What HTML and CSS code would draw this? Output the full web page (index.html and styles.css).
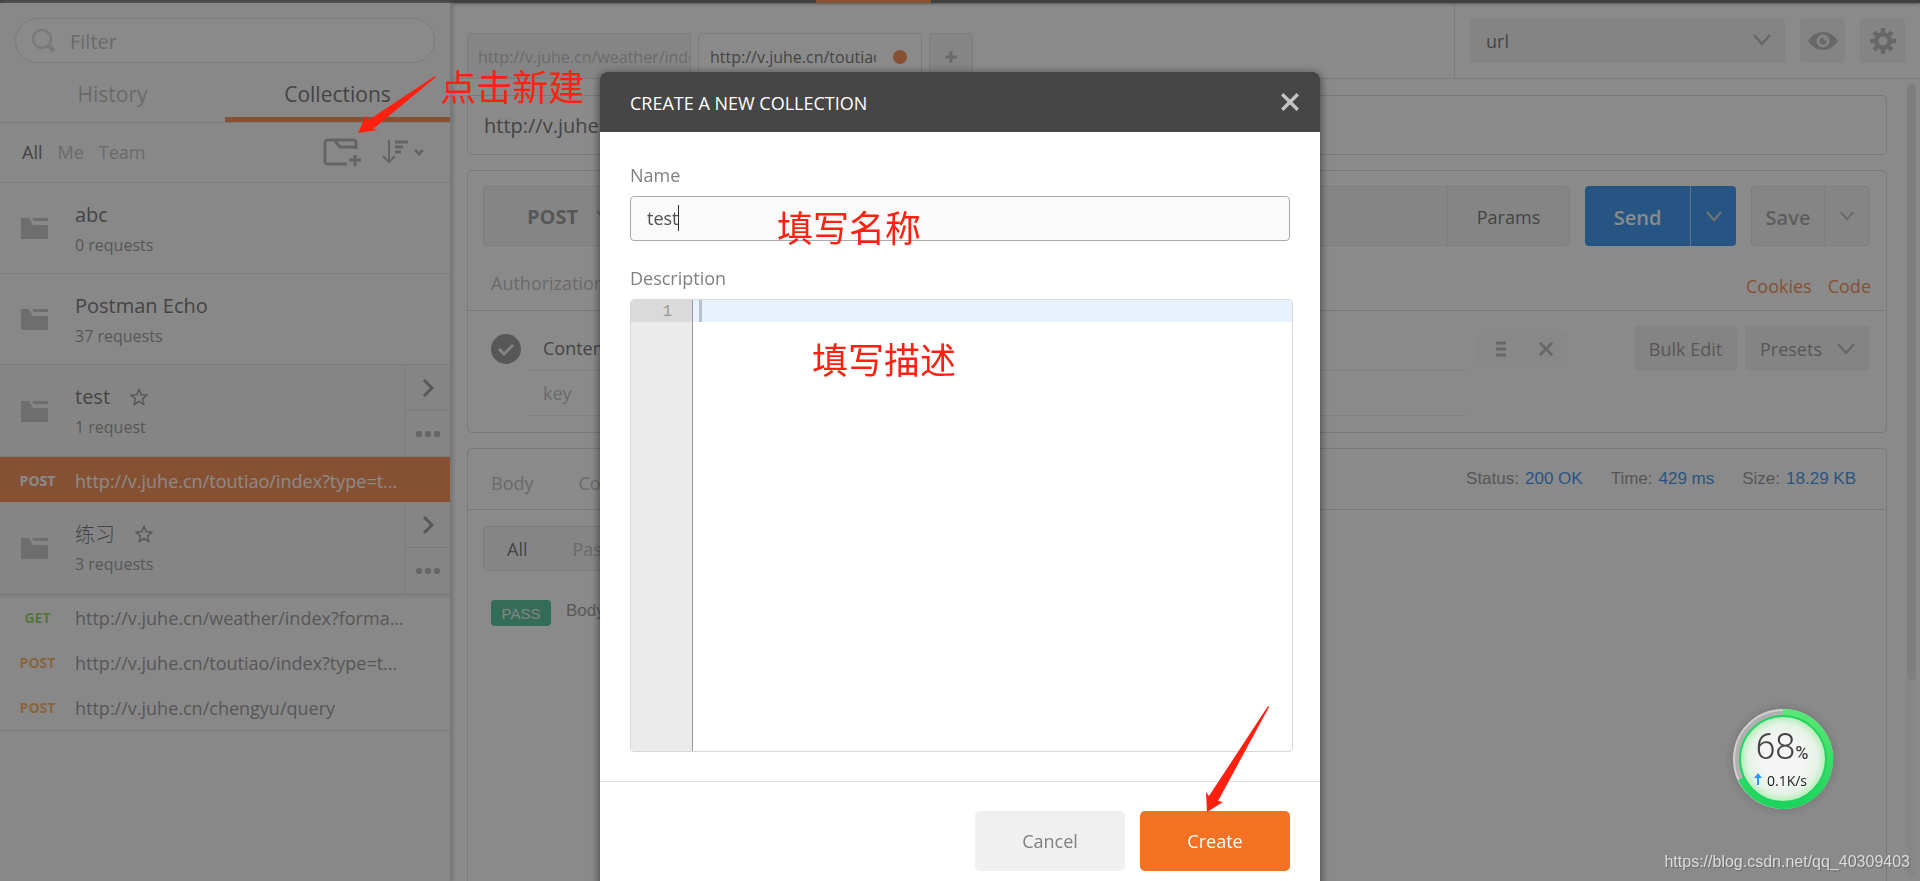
FILE: index.html
```html
<!DOCTYPE html>
<html lang="en">
<head>
<meta charset="utf-8">
<title>Create a new collection</title>
<link rel="stylesheet" href="styles.css">
</head>
<body>
<svg class="sprite" aria-hidden="true">
  <symbol id="folder" viewBox="0 0 27 22"><path d="M0 1h8l4 7h15v13a1 1 0 0 1-1 1H1a1 1 0 0 1-1-1z"/><path d="M11 1h15a1 1 0 0 1 1 1v2H13z"/></symbol>
  <symbol id="chev" viewBox="0 0 18 12"><path d="M1 1l8 9 8-9" fill="none" stroke="currentColor" stroke-width="2.4"/></symbol>
  <symbol id="right" viewBox="0 0 12 20"><path d="M2 2l8 8-8 8" fill="none" stroke="currentColor" stroke-width="3"/></symbol>
  <symbol id="dots" viewBox="0 0 24 6"><rect width="6" height="6" rx="2"/><rect x="9" width="6" height="6" rx="2"/><rect x="18" width="6" height="6" rx="2"/></symbol>
  <symbol id="star" viewBox="0 0 18 18"><path d="M9 1.3l2.2 5.4 5.8.4-4.5 3.700 1.500 5.800L9 13.500l-5 3.100 1.500-5.800L1 7.100l5.800-.4z" fill="none" stroke="currentColor" stroke-width="1.500" stroke-linejoin="round"/></symbol>
  <symbol id="cross" viewBox="0 0 18 18"><path d="M2 2l14 14M16 2L2 16" fill="none" stroke="currentColor" stroke-width="3"/></symbol>
</svg>

<div class="app">
  <header class="topbar"><span class="topbar-active"></span></header>
  <div class="workspace">
    <aside class="sidebar">
      <label class="filter">
        <svg width="25" height="24" viewBox="0 0 25 24"><circle cx="11" cy="10" r="9" fill="none" stroke="currentColor" stroke-width="2.500"/><path d="M17 16l6 6" stroke="currentColor" stroke-width="4"/></svg>
        <input type="text" placeholder="Filter" aria-label="Filter">
      </label>
      <nav class="side-tabs">
        <button>History</button>
        <button class="on">Collections</button>
      </nav>
      <div class="side-tools">
        <button class="on">All</button><button>Me</button><button>Team</button>
        <button class="new-folder" aria-label="New collection"><svg class="line" width="38" height="28" viewBox="0 0 38 28" stroke-width="3"><path d="M24 26H5q-3 0-3-3V5q0-3 3-3h25q3 0 3 3v6M11 2l6 7h16M32 17v11M26 22h12"/></svg></button>
        <button class="sort" aria-label="Sort"><svg class="line" width="42" height="24" viewBox="0 0 42 24" stroke-width="2"><path d="M7 0v22M1 16l6 6 6-6"/><path d="M13 2h13M13 7h8M13 12h6" stroke-width="3"/><path d="M33 10l4 4 4-4" stroke-width="3"/></svg></button>
      </div>
      <ul class="collections">
        <li class="row"><svg class="folder"><use href="#folder"/></svg><div class="info"><b>abc</b><small>0 requests</small></div></li>
        <li class="row"><svg class="folder"><use href="#folder"/></svg><div class="info"><b>Postman Echo</b><small>37 requests</small></div></li>
        <li class="row open"><svg class="folder"><use href="#folder"/></svg><div class="info"><b>test <svg class="star"><use href="#star"/></svg></b><small>1 request</small></div>
          <div class="row-actions"><button aria-label="Open"><svg width="12" height="20"><use href="#right"/></svg></button><button class="more" aria-label="More"><svg width="24" height="6"><use href="#dots"/></svg></button></div></li>
        <li class="request active"><span class="verb">POST</span><span class="link">http://v.juhe.cn/toutiao/index?type=t...</span></li>
        <li class="row open"><svg class="folder"><use href="#folder"/></svg><div class="info"><b><span class="cjk">练习</span> <svg class="star"><use href="#star"/></svg></b><small>3 requests</small></div>
          <div class="row-actions"><button aria-label="Open"><svg width="12" height="20"><use href="#right"/></svg></button><button class="more" aria-label="More"><svg width="24" height="6"><use href="#dots"/></svg></button></div></li>
        <li class="request first"><span class="verb get">GET</span><span class="link">http://v.juhe.cn/weather/index?forma...</span></li>
        <li class="request"><span class="verb">POST</span><span class="link">http://v.juhe.cn/toutiao/index?type=t...</span></li>
        <li class="request last"><span class="verb">POST</span><span class="link">http://v.juhe.cn/chengyu/query</span></li>
      </ul>
    </aside>

    <main class="main">
      <div class="head">
        <div class="tabs">
          <button class="tab"><span>http://v.juhe.cn/weather/index</span></button>
          <button class="tab on"><span>http://v.juhe.cn/toutiao</span><i class="dot"></i></button>
          <button class="tab add" aria-label="New tab"><svg width="12" height="12" viewBox="0 0 12 12"><path d="M6 0v12M0 6h12" stroke="currentColor" stroke-width="3"/></svg></button>
        </div>
        <div class="env">
          <div class="select"><select aria-label="Environment"><option>url</option></select><svg class="chev"><use href="#chev"/></svg></div>
          <button class="square" aria-label="Preview"><svg width="30" height="18" viewBox="0 0 30 18"><path d="M0 9Q6 0 15 0t15 9q-6 9-15 9T0 9z"/><circle cx="15" cy="9" r="6.500" fill="#f0f0f0"/><circle cx="15" cy="9" r="3.500"/><circle cx="17" cy="7" r="1.500" fill="#f0f0f0"/></svg></button>
          <button class="square" aria-label="Settings"><svg width="26" height="26" viewBox="-13 -13 26 26"><g stroke="currentColor" stroke-width="4.500"><path d="M0-13V13M-13 0H13M-9-9L9 9M9-9L-9 9"/></g><circle r="9"/><circle r="4.500" fill="#f0f0f0"/></svg></button>
        </div>
      </div>

      <div class="scroll">
        <div class="panels">
          <section class="panel title">http://v.juhe.cn/toutiao/index</section>

          <section class="panel">
            <div class="url-row">
              <div class="url-group">
                <div class="select method"><select aria-label="Method"><option>POST</option></select><svg class="chev"><use href="#chev"/></svg></div>
                <input type="text" aria-label="Request URL">
                <button class="params">Params</button>
              </div>
              <div class="split send"><button>Send</button><button aria-label="Send options"><svg class="chev medium"><use href="#chev"/></svg></button></div>
              <div class="split save"><button>Save</button><button aria-label="Save options"><svg class="chev small"><use href="#chev"/></svg></button></div>
            </div>
            <div class="subtabs"><button>Authorization</button><a href="#">Cookies</a><a href="#">Code</a></div>
            <div class="headers">
              <div class="keys">
                <div class="key-row"><svg class="check" width="30" height="30" viewBox="0 0 30 30"><circle cx="15" cy="15" r="15" fill="#808080"/><path d="M8 15l5 5 9-9" fill="none" stroke="#f0f0f0" stroke-width="3"/></svg><input type="text" value="Content-Type" aria-label="Header key"></div>
                <div class="key-row"><input type="text" placeholder="key" aria-label="New header key"></div>
              </div>
              <div class="row-tools">
                <button aria-label="Reorder"><svg width="10" height="16" viewBox="0 0 10 16"><path d="M0 2h10M0 8h10M0 14h10" stroke="currentColor" stroke-width="3"/></svg></button>
                <button aria-label="Remove"><svg width="16" height="16"><use href="#cross"/></svg></button>
              </div>
              <button class="soft">Bulk Edit</button>
              <button class="soft presets">Presets <svg class="chev"><use href="#chev"/></svg></button>
            </div>
          </section>

          <section class="panel response">
            <div class="res-head">
              <button>Body</button><button>Cookies</button>
              <dl><dt>Status:</dt><dd>200 OK</dd><dt>Time:</dt><dd>429 ms</dd><dt>Size:</dt><dd>18.29 KB</dd></dl>
            </div>
            <div class="res-filter"><button class="on">All</button><button>Passed</button></div>
            <p class="result"><span class="pass">PASS</span><span>Body</span></p>
          </section>
        </div>
        <div class="track"><div class="thumb"></div></div>
      </div>
    </main>
  </div>
</div>

<div class="backdrop">
  <form class="modal" role="dialog" aria-labelledby="dlg">
    <header class="modal-head"><h2 id="dlg">CREATE A NEW COLLECTION</h2><button type="button" aria-label="Close"><svg width="20" height="20"><use href="#cross"/></svg></button></header>
    <div class="modal-body">
      <label for="name">Name</label>
      <div class="field"><input id="name" type="text" value="test"><i class="caret"></i><span class="note note-name">填写名称</span></div>
      <label for="desc">Description</label>
      <div class="editor">
        <div class="gutter"><span>1</span></div>
        <textarea id="desc"></textarea>
        <i class="line-caret"></i>
        <span class="note note-desc">填写描述</span>
      </div>
    </div>
    <footer class="modal-foot"><button type="button">Cancel</button><button type="submit" class="primary">Create</button>
      <svg class="arrow arrow-create" width="66" height="108" viewBox="0 0 66 108"><path d="M64 1L65 2L14 96L19 97L3 107L2 87L5 91z"/></svg>
    </footer>
  </form>
</div>

<span class="note note-new">点击新建</span>
<svg class="arrow arrow-new" width="80" height="60" viewBox="0 0 80 60"><path d="M78 1L79 2L16 54L21 55L1 58L9 40L10 46z"/></svg>

<div class="meter">
  <svg width="116" height="116" viewBox="-58 -58 116 116">
    <defs>
      <radialGradient id="face"><stop offset=".5" stop-color="#f4f5f4"/><stop offset=".8" stop-color="#e6f3e6"/><stop offset="1" stop-color="#b4ecb8"/></radialGradient>
      <linearGradient id="ring" x1="0" y1="0" x2="0" y2="1"><stop offset="0" stop-color="#5be873"/><stop offset="1" stop-color="#19d45c"/></linearGradient>
      <radialGradient id="halo"><stop offset=".85" stop-color="#000" stop-opacity=".08"/><stop offset="1" stop-color="#000" stop-opacity="0"/></radialGradient>
    </defs>
    <circle r="58" fill="url(#halo)"/>
    <circle r="49" fill="#b0b0b0" stroke="#d0d0d0" stroke-width="2"/>
    <path d="M0-50A50 50 0 1 1-45 21L0 0z" fill="url(#ring)"/>
    <circle r="43" fill="url(#face)" stroke="#1fd35f" stroke-width="2"/>
    <path d="M-25 14l4 5h-3v7h-2v-7h-3z" fill="#2f96ff"/>
  </svg>
  <div class="meter-text"><p>68<small>%</small></p><span>0.1K/s</span></div>
</div>
<div class="watermark">https://blog.csdn.net/qq_40309403</div>
</body>
</html>
```
FILE: styles.css
```css
* { box-sizing: border-box; margin: 0; padding: 0; }
html, body { height: 100%; overflow: hidden; }
body { font: 18px/24px "Open Sans", "Noto Sans CJK SC", sans-serif; color: #505050; background: #fff; }
button, input, select, textarea { font: inherit; color: inherit; background: none; border: 0; outline: 0; min-width: 0; }
button { display: flex; align-items: center; justify-content: center; }
select { appearance: none; width: 100%; height: 100%; }
svg { display: block; flex: none; fill: currentColor; }
svg.line { fill: none; stroke: currentColor; }
ul { list-style: none; }
.sprite { position: absolute; width: 0; height: 0; }

.app { height: 100%; display: flex; flex-direction: column; }
.topbar { height: 3px; background: #464646; display: flex; justify-content: center; box-shadow: 0 1px 3px #808080; position: relative; }
.topbar-active { width: 115px; margin-right: 173px; background: #f47023; }
.workspace { flex: 1; min-height: 0; display: flex; }

.sidebar { width: 451px; flex: none; background: #fafafa; border-right: 1px solid #d4d4d4; box-shadow: 1px 0 5px #b0b0b0; z-index: 1; }
.filter { margin: 15px 15px 0; height: 45px; border: 1px solid #dbdbdb; border-radius: 23px; display: flex; align-items: center; gap: 14px; padding: 0 15px; color: #d4d4d4; background: #fff; }
.filter input { flex: 1; font-size: 20px; color: #808080; padding-top: 2px; }
::placeholder { color: #b0b0b0; opacity: 1; }
.side-tabs { display: flex; height: 60px; border-bottom: 1px solid #dbdbdb; }
.side-tabs button { flex: 1; font-size: 21px; color: #b0b0b0; padding-top: 8px; border-bottom: 5px solid transparent; }
.side-tabs .on { color: #505050; border-color: #f47023; }
.side-tools { display: flex; align-items: center; height: 60px; gap: 15px; padding: 0 26px 2px 22px; border-bottom: 1px solid #dbdbdb; color: #b0b0b0; }
.side-tools .on { color: #505050; }
.new-folder { margin-left: auto; color: #a0a0a0; }
.sort { margin-left: 6px; color: #a0a0a0; }
.row { height: 91px; display: flex; align-items: center; padding-left: 21px; border-bottom: 1px solid #dbdbdb; }
.row.open { height: 92px; background: #f3f3f3; }
.folder { width: 27px; height: 22px; color: #b8b8b8; }
.info { margin-left: 27px; flex: 1; padding-top: 3px; }
.info b { display: flex; align-items: center; font-size: 20px; line-height: 30px; font-weight: 400; gap: 20px; }
.info .cjk { font-weight: 300; font-family: "Noto Sans CJK SC", sans-serif; }
.info small { display: block; font-size: 16px; line-height: 30px; color: #808080; }
.star { width: 18px; height: 18px; color: #808080; }
.row-actions { width: 46px; align-self: stretch; border-left: 1px solid #dbdbdb; display: flex; flex-direction: column; color: #808080; }
.row-actions button { flex: 1; }
.row-actions .more { border-top: 1px solid #dbdbdb; color: #a8a8a8; }
.request { height: 45px; display: flex; align-items: center; color: #808080; padding-top: 2px; }
.verb { width: 75px; text-align: center; font-size: 14px; font-weight: 700; color: #f9a33c; }
.verb.get { color: #7dc93c; }
.request.active { background: #f47023; color: #fff; }
.request.active .verb { color: #fff; }
.request.first { box-shadow: inset 0 6px 6px -6px #b0b0b0; }
.request.last { border-bottom: 1px solid #dbdbdb; height: 47px; }

.main { flex: 1; min-width: 0; display: flex; flex-direction: column; }
.head { display: flex; height: 76px; border-bottom: 1px solid #dbdbdb; }
.tabs { flex: 1; display: flex; align-items: flex-end; gap: 7px; padding-left: 16px; }
.tab { width: 224px; height: 45px; padding: 2px 11px 0 10px; justify-content: flex-start; border: 1px solid #dbdbdb; border-bottom: 0; border-radius: 4px 4px 0 0; background: #f3f3f3; color: #b0b0b0; font-size: 16px; overflow: hidden; white-space: nowrap; }
.tab span { flex: none; }
.tab.on { background: #fff; color: #505050; padding-left: 11px; }
.tab.on span { width: 166px; overflow: hidden; text-align: left; }
.tab .dot { width: 14px; height: 14px; border-radius: 50%; background: #f47023; margin-left: 17px; flex: none; }
.tab.add { width: 44px; padding: 2px 0 0; justify-content: center; }
.env { display: flex; gap: 15px; padding: 15px 15px 0; border-left: 1px solid #dbdbdb; }
.select { position: relative; width: 315px; height: 45px; background: #f0f0f0; border-radius: 4px; }
.select select { padding: 0 16px; }
.select .chev { position: absolute; right: 14px; top: 16px; pointer-events: none; }
.chev { width: 18px; height: 12px; color: #a8a8a8; }
.chev.medium { width: 16px; height: 11px; }
.chev.small { width: 14px; height: 10px; }
.square { width: 45px; height: 45px; background: #f0f0f0; border-radius: 4px; color: #a8a8a8; }

.scroll { flex: 1; min-height: 0; display: flex; }
.panels { flex: 1; min-width: 0; display: flex; flex-direction: column; gap: 15px; padding: 16px 20px 0 16px; }
.panel { border: 1px solid #d4d4d4; border-radius: 5px; }
.title { height: 60px; padding: 18px 16px; font-size: 20px; }
.url-row { display: flex; gap: 15px; padding: 15px 16px 0 15px; }
.url-group { flex: 1; display: flex; height: 60px; background: #f3f3f3; border: 1px solid #dbdbdb; border-radius: 4px; }
.url-group input { flex: 1; }
.method { width: 140px; height: 58px; font-size: 20px; font-weight: 700; color: #808080; background: none; }
.method select { padding: 2px 0 0 43px; }
.method .chev { top: 23px; right: 10px; }
.params { width: 122px; padding-top: 2px; border-left: 1px solid #dbdbdb; }
.split { display: flex; height: 60px; border-radius: 4px; overflow: hidden; font-size: 20px; font-weight: 600; }
.split button:first-child { flex: 1; padding-top: 3px; }
.send { width: 151px; background: #097bed; color: #fff; }
.send button:first-child { border-right: 1px solid #9ac4ee; }
.send button:last-child { width: 45px; }
.send .chev { color: #c4c4c4; }
.save { width: 119px; background: #f3f3f3; border: 1px solid #dbdbdb; color: #909090; }
.save button:first-child { border-right: 1px solid #dbdbdb; }
.save button:last-child { width: 44px; }
.subtabs { display: flex; align-items: center; gap: 16px; height: 65px; padding: 10px 15px 0 23px; border-bottom: 1px solid #d4d4d4; color: #b0b0b0; }
.subtabs button { margin-right: auto; }
.subtabs a { color: #f47023; text-decoration: none; padding-top: 5px; }
.headers { display: flex; padding: 15px 16px 15px 23px; height: 121px; }
.keys { flex: 1; display: flex; flex-direction: column; }
.key-row { height: 45px; display: flex; align-items: center; }
.key-row input { flex: 1; height: 45px; padding-left: 15px; border-bottom: 1px solid #e8e8e8; }
.key-row .check { margin-right: 7px; }
.key-row:last-child { padding-left: 37px; }
.row-tools { display: flex; width: 90px; height: 38px; margin: 4px 66px 0 11px; background: #fafafa; border-radius: 4px; color: #a8a8a8; }
.row-tools button { flex: 1; }
.soft { width: 103px; height: 45px; background: #f0f0f0; border-radius: 4px; color: #808080; }
.presets { width: 125px; margin-left: 8px; gap: 15px; }
.response { flex: 1; border-bottom: 0; border-radius: 5px 5px 0 0; }
.res-head { display: flex; align-items: center; height: 61px; padding: 8px 30px 0 23px; gap: 45px; border-bottom: 1px solid #d4d4d4; color: #b0b0b0; }
.res-head dl { margin-left: auto; display: flex; font: 17px/20px "Liberation Sans", sans-serif; padding-bottom: 8px; }
.res-head dt { color: #808080; margin-right: 6px; }
.res-head dd { color: #097bed; margin-right: 28px; }
.res-head dd:last-child { margin-right: 0; }
.res-filter { display: flex; width: 400px; height: 45px; margin: 16px 0 0 15px; padding-left: 23px; gap: 45px; background: #f3f3f3; border: 1px solid #dbdbdb; border-radius: 4px; color: #b0b0b0; }
.res-filter .on { color: #505050; }
.result { display: flex; gap: 15px; margin: 29px 0 0 23px; color: #808080; font: 17px/22px "Liberation Sans", sans-serif; }
.pass { width: 60px; height: 26px; border-radius: 4px; background: #26b47f; color: #f0f0f0; font-size: 15px; line-height: 27px; text-align: center; }
.track { width: 9px; margin: 5px 4px 3px 0; border-radius: 5px; background: #f6f6f6; }
.thumb { height: 75%; border-radius: 5px; background: #e0e0e0; }

.backdrop { position: fixed; inset: 0; z-index: 2; background: rgba(60, 60, 60, .6); display: flex; justify-content: center; align-items: flex-start; padding-top: 72px; overflow: hidden; }
.modal { width: 720px; background: #fff; border-radius: 6px; box-shadow: 0 2px 10px rgba(0, 0, 0, .6); }
.modal-head { height: 60px; display: flex; align-items: center; justify-content: space-between; padding: 0 20px 0 30px; background: #464646; color: #fff; border-radius: 6px 6px 0 0; }
.modal-head h2 { font-size: 18px; font-weight: 400; padding-top: 2px; }
.modal-head button { color: #c4c4c4; width: 20px; }
.modal-body { padding: 30px 27px 29px 30px; color: #808080; display: flex; flex-direction: column; }
.modal-body label { line-height: 26px; margin-bottom: 8px; }
.field { position: relative; height: 45px; margin: 0 3px 24px 0; }
.field input { width: 100%; height: 45px; padding: 0 16px 2px; border: 1px solid #aaa; border-radius: 4px; background: #fafafa; color: #505050; }
.caret { position: absolute; left: 48px; top: 9px; width: 1px; height: 26px; background: #303030; }
.editor { position: relative; height: 453px; border: 1px solid #d8d8d8; border-radius: 4px; display: flex; overflow: hidden; }
.gutter { width: 62px; background: #ebebeb; border-right: 1px solid #999; color: #999; font: 16px/24px "Liberation Mono", monospace; }
.gutter span { display: block; height: 22px; padding-right: 20px; text-align: right; background: #dadada; }
.editor textarea { flex: 1; resize: none; background: linear-gradient(#e8f2ff, #e8f2ff) no-repeat; background-size: 100% 22px; }
.line-caret { position: absolute; left: 68px; top: 0; width: 3px; height: 22px; background: #b8c2cc; }
.modal-foot { position: relative; border-top: 1px solid #ddd; padding: 29px 30px; display: flex; justify-content: flex-end; gap: 15px; }
.modal-foot button { width: 150px; height: 60px; border-radius: 5px; background: #f0f0f0; color: #808080; }
.modal-foot .primary { background: #f47023; color: #fff; }

.note { position: absolute; z-index: 4; white-space: nowrap; color: #ff2010; font: 36px/44px "Noto Sans CJK SC", sans-serif; }
.note-new { left: 440px; top: 63px; }
.note-name { left: 147px; top: 8px; }
.note-desc { left: 181px; top: 36px; }
.arrow { position: absolute; z-index: 4; fill: #ff2010; }
.arrow-new { left: 357px; top: 75px; }
.arrow-create { right: 50px; top: -77px; }

.meter { position: fixed; right: 79px; bottom: 64px; z-index: 5; }
.meter-text { position: absolute; inset: 0; color: #444; text-align: center; }
.meter-text p { font: 36px/36px "Roboto", sans-serif; font-weight: 300; margin-top: 28px; padding-right: 2px; }
.meter-text small { font-size: 18px; font-weight: 500; }
.meter-text span { display: block; padding-left: 8px; font: 14px/18px "Open Sans", sans-serif; color: #222; margin-top: 1px; }
.watermark { position: fixed; right: 10px; bottom: 7px; z-index: 5; font: 16px/24px "Liberation Sans", sans-serif; color: #dcdcdc; text-shadow: 1px 1px 1px #666; }
```
